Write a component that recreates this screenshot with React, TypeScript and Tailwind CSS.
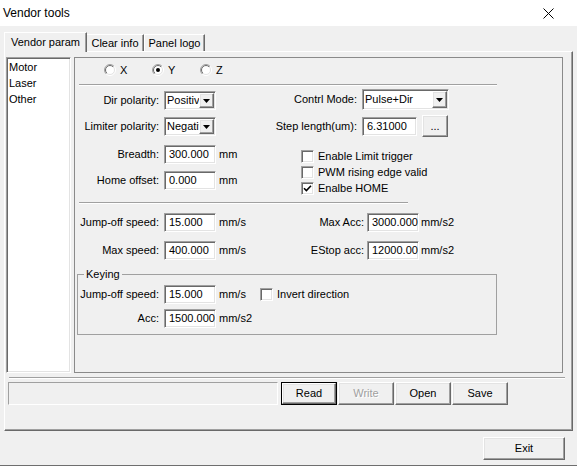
import React from "react";

const sunken =
  "bg-white border border-t-[#a0a0a0] border-l-[#a0a0a0] border-r-white border-b-white shadow-[inset_1px_1px_0_#696969,inset_-1px_-1px_0_#e3e3e3]";
const raised =
  "bg-[#f0f0f0] border border-t-white border-l-white border-r-[#696969] border-b-[#696969] shadow-[inset_-1px_-1px_0_#a0a0a0,inset_1px_1px_0_#e3e3e3]";

function Radio({ checked, id }: { checked?: boolean; id: string }) {
  return (
    <svg width="12" height="12" viewBox="0 0 12 12" className="shrink-0">
      <defs>
        <linearGradient id={`o${id}`} x1="0" y1="0" x2="1" y2="1">
          <stop offset="0.5" stopColor="#a0a0a0" />
          <stop offset="0.5" stopColor="#ffffff" />
        </linearGradient>
        <linearGradient id={`i${id}`} x1="0" y1="0" x2="1" y2="1">
          <stop offset="0.5" stopColor="#696969" />
          <stop offset="0.5" stopColor="#e3e3e3" />
        </linearGradient>
      </defs>
      <circle cx="6" cy="6" r="5.5" fill="none" stroke={`url(#o${id})`} />
      <circle cx="6" cy="6" r="4.5" fill="#fff" stroke={`url(#i${id})`} />
      {checked && <circle cx="6" cy="6" r="2" fill="#000" />}
    </svg>
  );
}

function Check({ checked }: { checked?: boolean }) {
  return (
    <div className={`${sunken} w-[13px] h-[13px] shrink-0 flex items-center justify-center`}>
      {checked && (
        <svg width="9" height="9" viewBox="0 0 9 9">
          <path d="M1 4.2 L3.4 6.6 L8 1.8" stroke="#000" strokeWidth="1.6" fill="none" />
        </svg>
      )}
    </div>
  );
}

function Arrow() {
  return (
    <svg width="7" height="4" viewBox="0 0 7 4">
      <path d="M0 0 H7 L3.5 4 Z" fill="#000" />
    </svg>
  );
}

function Select({ value, w, h }: { value: string; w: string; h: string }) {
  return (
    <div className={`${sunken} ${w} ${h} p-[1px] flex items-stretch overflow-hidden`}>
      <span className="flex-1 pl-[1px] flex items-center whitespace-nowrap overflow-hidden">{value}</span>
      <div className={`${raised} w-[15px] shrink-0 flex items-center justify-center`}>
        <Arrow />
      </div>
    </div>
  );
}

function Input({ value, w = "w-[52px]" }: { value: string; w?: string }) {
  return (
    <div className={`${sunken} ${w} h-[19px] shrink-0 flex items-center pl-[4px] whitespace-nowrap overflow-hidden`}>
      {value}
    </div>
  );
}

function Label({ text, w }: { text: string; w: string }) {
  return <div className={`${w} shrink-0 text-right whitespace-nowrap`}>{text}</div>;
}

function Btn({ text, disabled, def, w = "w-[56px]", h = "h-[23px]" }: { text: string; disabled?: boolean; def?: boolean; w?: string; h?: string }) {
  const inner = (
    <div
      className={`${raised} w-full h-full flex items-center justify-center ${
        disabled ? "text-[#a0a0a0] [text-shadow:1px_1px_0_#fff]" : ""
      }`}
    >
      {text}
    </div>
  );
  if (def) {
    return <div className={`${w} ${h} border border-black shrink-0`}>{inner}</div>;
  }
  return <div className={`${w} ${h} shrink-0`}>{inner}</div>;
}

function Sep({ w }: { w: string }) {
  return <div className={`${w} h-[2px] border-t border-t-[#a0a0a0] border-b border-b-white shrink-0`} />;
}

export default function App() {
  return (
    <div className="w-[577px] h-[466px] bg-[#f0f0f0] border-b border-b-[#6e6e6e] flex flex-col text-[11px] leading-[13px] text-black font-['Liberation_Sans',Arial,sans-serif] overflow-hidden">
      {/* title bar */}
      <div className="h-[26px] bg-white flex items-center pl-[3px] pr-[23px] shrink-0">
        <span className="text-[12px] leading-[14px]">Vendor tools</span>
        <svg className="ml-auto" width="11" height="11" viewBox="0 0 11 11">
          <path d="M0.5 0.5 L10.5 10.5 M10.5 0.5 L0.5 10.5" stroke="#000" strokeWidth="1" />
        </svg>
      </div>

      {/* tabs */}
      <div className="h-[25px] flex items-end pl-[4px] shrink-0">
        <div className="relative z-10 -mb-px h-[20px] w-[83px] flex items-center justify-center bg-[#f0f0f0] border-t border-l border-t-white border-l-white border-r border-r-[#696969] shadow-[inset_-1px_0_0_#a0a0a0] pb-[1px]">
          Vendor param
        </div>
        <div className="h-[17px] w-[57px] flex items-center justify-center border-t border-t-white border-r border-r-[#696969] shadow-[inset_-1px_0_0_#a0a0a0]">
          Clear info
        </div>
        <div className="h-[17px] w-[61px] flex items-center justify-center border-t border-l border-t-white border-l-white border-r border-r-[#696969] shadow-[inset_-1px_0_0_#a0a0a0]">
          Panel logo
        </div>
      </div>

      {/* tab panel */}
      <div className="w-[569px] ml-[4px] border border-t-white border-l-white border-r-[#696969] border-b-[#696969] shadow-[inset_-1px_-1px_0_#a0a0a0] flex flex-col pt-[5px] pb-[25px] shrink-0">
        <div className="flex">
          {/* list */}
          <div className={`${sunken} ml-[1px] w-[65px] h-[316px] flex flex-col pl-[2px] pt-[1px] leading-[16px]`}>
            <div>Motor</div>
            <div>Laser</div>
            <div>Other</div>
          </div>

          {/* parameter frame */}
          <div className="ml-[3px] w-[489px] h-[316px] border border-[#8a8a8a] flex flex-col">
            {/* radios */}
            <div className="h-[24px] flex items-center pl-[29px] shrink-0">
              <div className="w-[48px] flex items-center gap-[4px]">
                <Radio id="x" />
                <span>X</span>
              </div>
              <div className="w-[48px] flex items-center gap-[4px]">
                <Radio id="y" checked />
                <span>Y</span>
              </div>
              <div className="w-[48px] flex items-center gap-[4px]">
                <Radio id="z" />
                <span>Z</span>
              </div>
            </div>
            <div className="mt-[2px] ml-[4px]">
              <Sep w="w-[418px]" />
            </div>

            {/* section A */}
            <div className="mt-[3px] flex shrink-0">
              <div className="w-[200px] flex flex-col shrink-0">
                <div className="mt-[2px] h-[19px] flex items-center">
                  <Label text="Dir polarity:" w="w-[84px]" />
                  <div className="ml-[5px]">
                    <Select value="Positive" w="w-[52px]" h="h-[19px]" />
                  </div>
                </div>
                <div className="mt-[7px] h-[19px] flex items-center">
                  <Label text="Limiter polarity:" w="w-[84px]" />
                  <div className="ml-[5px]">
                    <Select value="Negative" w="w-[52px]" h="h-[19px]" />
                  </div>
                </div>
                <div className="mt-[9px] h-[19px] flex items-center">
                  <Label text="Breadth:" w="w-[84px]" />
                  <div className="ml-[5px]">
                    <Input value="300.000" />
                  </div>
                  <span className="ml-[3px]">mm</span>
                </div>
                <div className="mt-[7px] h-[19px] flex items-center">
                  <Label text="Home offset:" w="w-[84px]" />
                  <div className="ml-[5px]">
                    <Input value="0.000" />
                  </div>
                  <span className="ml-[3px]">mm</span>
                </div>
              </div>
              <div className="flex flex-col">
                <div className="h-[21px] flex items-center">
                  <Label text="Contrl Mode:" w="w-[82px]" />
                  <div className="ml-[5px]">
                    <Select value="Pulse+Dir" w="w-[87px]" h="h-[21px]" />
                  </div>
                </div>
                <div className="mt-[5px] h-[22px] flex items-center">
                  <Label text="Step length(um):" w="w-[82px]" />
                  <div className="ml-[5px]">
                    <Input value="6.31000" w="w-[55px]" />
                  </div>
                  <div className="ml-[5px]">
                    <Btn text="..." w="w-[26px]" h="h-[22px]" />
                  </div>
                </div>
                <div className="mt-[11px] ml-[26px] flex flex-col">
                  <div className="h-[16px] flex items-center">
                    <Check />
                    <span className="ml-[4px] whitespace-nowrap">Enable Limit trigger</span>
                  </div>
                  <div className="h-[16px] flex items-center">
                    <Check />
                    <span className="ml-[4px] whitespace-nowrap">PWM rising edge valid</span>
                  </div>
                  <div className="h-[16px] flex items-center">
                    <Check checked />
                    <span className="ml-[4px] whitespace-nowrap">Enalbe HOME</span>
                  </div>
                </div>
              </div>
            </div>

            <div className="mt-[6px] ml-[4px]">
              <Sep w="w-[329px]" />
            </div>

            {/* section B */}
            <div className="mt-[9px] h-[19px] flex items-center shrink-0">
              <div className="w-[200px] flex items-center shrink-0">
                <Label text="Jump-off speed:" w="w-[84px]" />
                <div className="ml-[5px]">
                  <Input value="15.000" />
                </div>
                <span className="ml-[3px]">mm/s</span>
              </div>
              <Label text="Max Acc:" w="w-[89px]" />
              <div className="ml-[3px]">
                <Input value="3000.000" />
              </div>
              <span className="ml-[2px]">mm/s2</span>
            </div>
            <div className="mt-[9px] h-[19px] flex items-center shrink-0">
              <div className="w-[200px] flex items-center shrink-0">
                <Label text="Max speed:" w="w-[84px]" />
                <div className="ml-[5px]">
                  <Input value="400.000" />
                </div>
                <span className="ml-[3px]">mm/s</span>
              </div>
              <Label text="EStop acc:" w="w-[89px]" />
              <div className="ml-[3px]">
                <Input value="12000.000" />
              </div>
              <span className="ml-[2px]">mm/s2</span>
            </div>

            {/* keying group */}
            <fieldset className="mt-[8px] ml-[2px] w-[420px] border border-[#a0a0a0] pb-[6px] shrink-0">
              <legend className="ml-[6px] px-[2px] leading-[13px]">Keying</legend>
              <div className="mt-[4px] h-[19px] flex items-center">
                <Label text="Jump-off speed:" w="w-[81px]" />
                <div className="ml-[5px]">
                  <Input value="15.000" />
                </div>
                <span className="ml-[3px] w-[41px]">mm/s</span>
                <Check />
                <span className="ml-[4px] whitespace-nowrap">Invert direction</span>
              </div>
              <div className="mt-[5px] h-[19px] flex items-center">
                <Label text="Acc:" w="w-[81px]" />
                <div className="ml-[5px]">
                  <Input value="1500.000" />
                </div>
                <span className="ml-[3px]">mm/s2</span>
              </div>
            </fieldset>
          </div>
        </div>

        <div className="mt-[4px] ml-[4px]">
          <Sep w="w-[556px]" />
        </div>

        {/* status + buttons */}
        <div className="mt-[3px] ml-[3px] flex items-center">
          <div className="w-[270px] h-[23px] border border-t-[#a0a0a0] border-l-[#a0a0a0] border-r-white border-b-white shrink-0" />
          <div className="ml-[3px] flex gap-[1px]">
            <Btn text="Read" def />
            <Btn text="Write" disabled />
            <Btn text="Open" />
            <Btn text="Save" />
          </div>
        </div>
      </div>

      {/* exit */}
      <div className="mt-[6px] flex justify-end pr-[12px] shrink-0">
        <Btn text="Exit" w="w-[82px]" h="h-[23px]" />
      </div>
    </div>
  );
}
